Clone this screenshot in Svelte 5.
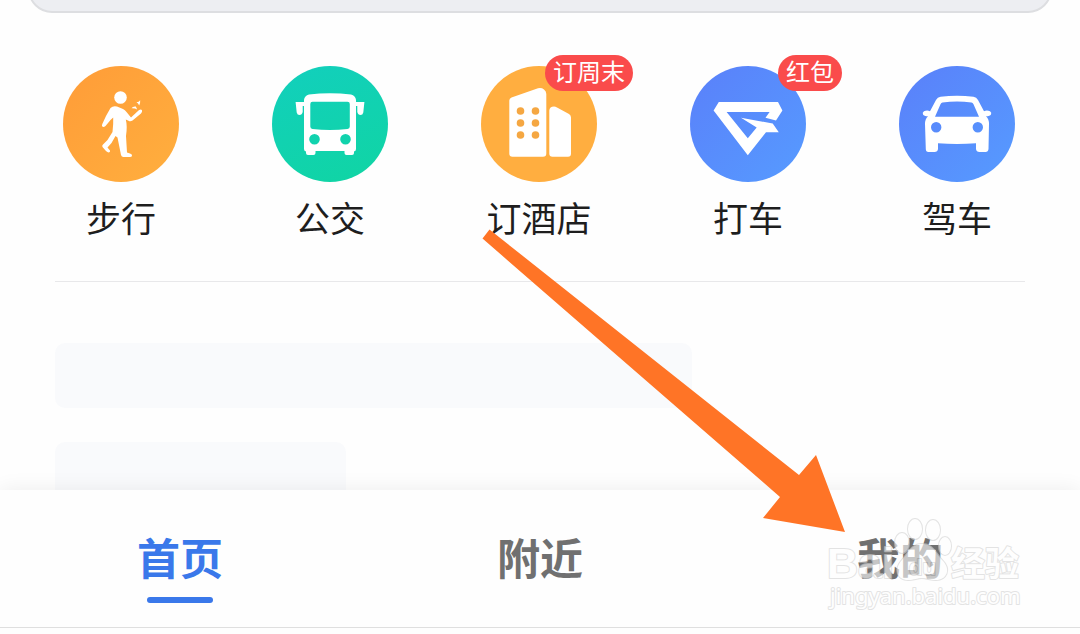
<script lang="ts">
  interface IShortcut {
    id: string;
    label: string;
    badge?: string;
  }

  const shortcuts: IShortcut[] = [
    { id: 'walk', label: '步行' },
    { id: 'bus', label: '公交' },
    { id: 'hotel', label: '订酒店', badge: '订周末' },
    { id: 'taxi', label: '打车', badge: '红包' },
    { id: 'drive', label: '驾车' }
  ];

  const tabs = ['首页', '附近', '我的'];
  let active = $state('首页');
</script>

<div class="page">
  <header class="top">
    <div class="search"></div>
  </header>

  <main class="content">
    <div class="shortcuts">
      {#each shortcuts as item (item.id)}
        <button class="shortcut" type="button">
          <span class="circle {item.id}">
            <svg viewBox="0 0 116 116" fill="#fff" aria-hidden="true">
              {#if item.id === 'walk'}
                <circle cx="57.5" cy="31.5" r="6.3" />
                <path
                  d="M47.5 42Q50 39.5 54 40.5L60 43Q62 44 63.5 46L68 51.5L75.5 44.5Q78 42.5 79 44.2Q79.6 45.6 78 47.5L69.5 54.5Q67.5 56 65.5 54.8L62.8 53.5Q64.5 60 63 70L64 86.5L67 87.5Q69.5 88.3 69 90Q68.5 91 67 91H60.5Q58.5 91 58 89L54.5 71.5L52.5 70L48.5 77L44.5 81.5L47 84.5Q47.5 86.5 45.5 86.5Q43.5 86 39.5 81Q38.7 79.6 40 78.5L44.5 74L49.5 66Q50.5 58 50.2 51.5L47.5 54L42.5 60Q40.5 61.5 39.3 60.5Q38.6 59.6 39.3 58L43 50Z"
                />
                <path d="M68.5 42.2Q70 40.2 72.8 40.6L74.2 43.6Q72 42 68.5 42.2ZM73.4 36.2Q75.5 36.5 77.2 34.2Q77.4 37 76.2 39.6Q75.3 37 73.4 36.2Z" />
              {:else if item.id === 'bus'}
                <path
                  fill-rule="evenodd"
                  d="M37 28.5Q58 26 79 28.5Q83.5 29.5 84 34V83Q84 85 82 85.5V87Q82 89 80 89H74.5Q72.500 89 72.500 87V85H43.500V87Q43.500 89 41.500 89H36Q34 89 34 87V85.500Q32 85 32 83V34Q32.500 29.500 37 28.500ZM40.500 35.800Q38.300 35.800 38.300 38V60.500Q38.300 62.600 40.500 63Q58 65 75.500 63Q77.800 62.600 77.800 60.500V38Q77.800 35.800 75.500 35.800ZM37.200 73.300A5.300 5.300 0 1 0 47.800 73.300A5.300 5.300 0 1 0 37.200 73.300ZM68.200 73.300A5.300 5.300 0 1 0 78.800 73.300A5.300 5.300 0 1 0 68.200 73.300Z"
                />
                <path d="M23.6 36H32V40H30.7V46Q30 49 27.5 49Q25.3 49 24.7 46.5ZM92.4 36H84V40H85.3V46Q86 49 88.5 49Q90.7 49 91.3 46.5Z" />
              {:else if item.id === 'hotel'}
                <path d="M30.5 31.5L57 22.3Q60.5 21.5 63 23.5Q65.3 25 65.3 28V87.5Q65.3 90.7 62 90.7H31.5Q28.3 90.7 28.3 87.5V34.5Q28.3 32.4 30.5 31.5Z" />
                <path d="M68.3 44.5Q68.6 40.6 73 40.5Q74.5 40.5 76 41.5L88 48Q90 49 90 51.5V87.5Q90 90.7 87 90.7H71.5Q68.3 90.7 68.3 87.5Z" />
                <g fill="#f5a742">
                  {#each [45, 57, 69] as y}
                    <circle cx="39.5" cy={y} r="3.8" />
                    <circle cx="54.5" cy={y} r="3.8" />
                  {/each}
                </g>
              {:else if item.id === 'taxi'}
                <path
                  d="M28.8 36H88L92.4 44.6L86 54.4L75.5 51.8L79.6 46H36.6L57.8 72.3L66.7 61.5L51 51.7L82.7 57.5L88.8 66.3H76L57.8 89.2L23.6 44.6Z"
                />
              {:else}
                <path
                  fill-rule="evenodd"
                  d="M41.5 30.8Q58 28.8 74.5 30.8Q77.5 31.3 79 34L85 45.2Q88 43.8 91 45.3Q93 46.6 92 48.5Q91 50.3 87 50.3Q90 53 90 58L89.5 83Q89.2 86 86.5 86H80.5Q77.3 86 77 83V77.3Q58 78.5 39 77.3V83Q38.7 86 35.5 86H29.5Q26.8 86 26.8 83L26 58Q26 53 29 50.3Q25 50.3 24 48.5Q23 46.6 25 45.3Q28 43.8 31 45.2L37 34Q38.5 31.3 41.5 30.8ZM43.5 36.4Q42.3 36.7 41.5 38.2L36 50.8H80L74.5 38.2Q73.7 36.7 72.5 36.4Q58 34.6 43.5 36.4ZM32 61.3A5.2 5.2 0 1 0 42.4 61.3A5.2 5.2 0 1 0 32 61.3ZM73.6 61.3A5.2 5.2 0 1 0 84 61.3A5.2 5.2 0 1 0 73.6 61.3Z"
                />
              {/if}
            </svg>
            {#if item.badge}
              <span class="badge">{item.badge}</span>
            {/if}
          </span>
          <span class="label">{item.label}</span>
        </button>
      {/each}
    </div>

    <div class="feed">
      <div class="skeleton wide"></div>
      <div class="skeleton short"></div>
    </div>
  </main>

  <nav class="tabs">
    {#each tabs as tab (tab)}
      <button
        class="tab"
        class:active={active === tab}
        type="button"
        onclick={() => (active = tab)}
      >
        {tab}
      </button>
    {/each}
  </nav>

  <svg class="overlay" viewBox="0 0 1080 634" aria-hidden="true">
    <path fill="#ff7426" d="M489.5 229.5L482.5 238.5L780 497L763 518L845 532L816 455L799 475Z" />
    <g class="mark">
      <text x="827" y="578" font-size="43" font-weight="700">Bai</text>
      <path d="M922 544C933 544 936 554 942 560C952 570 946 580 936 580C930 580 927 578 922 578C917 578 914 580 908 580C898 580 893 570 902 560C908 554 911 544 922 544Z" />
      <ellipse cx="902" cy="543" rx="7" ry="10" />
      <ellipse cx="915" cy="529" rx="7" ry="10" />
      <ellipse cx="933" cy="530" rx="7" ry="10" />
      <ellipse cx="945" cy="546" rx="6" ry="9" />
      <text x="909" y="575" font-size="22" font-weight="700">du</text>
      <text x="951" y="576" font-size="34" font-weight="700">经验</text>
      <text class="url" x="830" y="604" font-size="22">jingyan.baidu.com</text>
    </g>
  </svg>
</div>

<style>
  :global(body) {
    margin: 0;
    background: #fefefe;
  }

  .page {
    position: relative;
    display: flex;
    flex-direction: column;
    height: 100vh;
    padding-bottom: 6px;
    box-sizing: border-box;
    overflow: hidden;
    font-family: 'Noto Sans CJK SC', 'Noto Sans', sans-serif;
  }

  button {
    padding: 0;
    border: none;
    background: none;
    font-family: inherit;
    cursor: pointer;
  }

  /* only the lower edge of the search box is in view */
  .top {
    display: flex;
    align-items: flex-end;
    flex: none;
    height: 13px;
    padding: 0 28px;
    overflow: hidden;
  }
  .search {
    flex: 1;
    height: 64px;
    border: 2px solid #dddee1;
    border-radius: 24px;
    box-sizing: border-box;
    background: #edeef2;
  }

  .content {
    flex: 1;
    min-height: 0;
    padding: 53px 55px 0;
    overflow: hidden;
  }

  .shortcuts {
    display: flex;
    justify-content: space-between;
    padding: 0 10px 42px 8px;
    border-bottom: 1px solid #e8e8ea;
  }
  .shortcut {
    display: flex;
    flex-direction: column;
    align-items: center;
    gap: 13px;
    width: 116px;
  }
  .circle {
    position: relative;
    width: 116px;
    height: 116px;
    border-radius: 50%;
  }
  .circle svg {
    display: block;
    width: 100%;
  }
  .walk {
    background: linear-gradient(135deg, #ff9c38, #ffaf3e);
  }
  .bus {
    background: linear-gradient(160deg, #12cfbd, #10d5a3);
  }
  .hotel {
    background: #ffae40;
  }
  .taxi,
  .drive {
    background: linear-gradient(135deg, #5a80fa, #569bff);
  }
  .badge {
    position: absolute;
    top: -11px;
    right: -36px;
    padding: 0 8px 4px;
    border-radius: 18px;
    background: #fa4b4b;
    color: #fff;
    font-size: 24px;
    line-height: 32px;
    white-space: nowrap;
  }
  .label {
    color: #1e1e1e;
    font-size: 35px;
    line-height: 44px;
    white-space: nowrap;
  }

  .feed {
    display: flex;
    flex-direction: column;
    gap: 34px;
    padding-top: 61px;
  }
  .skeleton {
    flex: none;
    height: 65px;
    border-radius: 10px;
    background: #f9fafc;
  }
  .wide {
    width: 65.7%;
  }
  .short {
    width: 30%;
  }

  .tabs {
    position: relative;
    display: grid;
    grid-template-columns: repeat(3, 1fr);
    flex: none;
    border-bottom: 1px solid #dfdfdf;
    background: #fefefe;
    box-shadow: 0 0 20px rgba(0, 0, 0, 0.07);
    /* keep the shadow on the upper side */
    clip-path: inset(-20px 0 0 0);
  }
  .tab {
    display: flex;
    flex-direction: column;
    align-items: center;
    gap: 20px;
    padding: 45px 0 24px;
    color: #707070;
    font-size: 43px;
    font-weight: 700;
    line-height: 42px;
  }
  .tab::after {
    content: '';
    width: 66px;
    height: 6px;
    border-radius: 3px;
  }
  .tab.active {
    color: #3a78ea;
  }
  .tab.active::after {
    background: #3a78ea;
  }

  .overlay {
    position: absolute;
    inset: 0;
    width: 100%;
    pointer-events: none;
  }
  .mark {
    fill: #fff;
    stroke: #d2d2d2;
    stroke-width: 2;
    stroke-linejoin: round;
    paint-order: stroke;
    opacity: 0.6;
    font-family: 'Liberation Sans', 'Noto Sans CJK SC', sans-serif;
  }
  .url {
    font-family: 'Noto Sans', sans-serif;
  }
</style>
